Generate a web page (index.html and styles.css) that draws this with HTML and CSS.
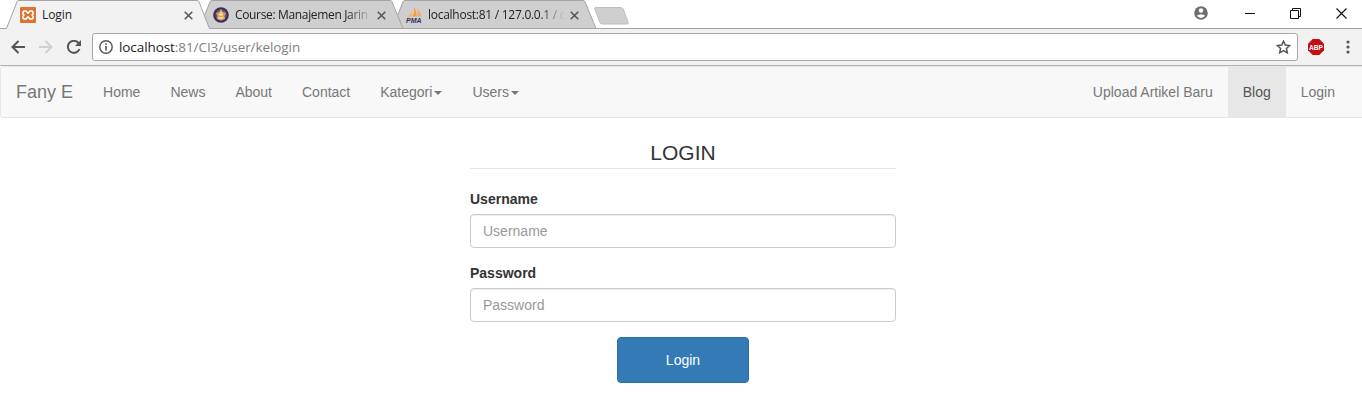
FILE: index.html
```html
<!DOCTYPE html>
<html lang="id">
<head>
<meta charset="utf-8">
<title>Login</title>
<link rel="stylesheet" href="styles.css">
</head>
<body>
<div class="browser">
  <div class="tabstrip">
    <div class="tab tab-active">
      <svg class="tab-shape" width="208" height="29" viewBox="0 0 208 29"><path d="M0 28.500H1.500L12 1.800Q12.600.500 14 .500H192Q193.500.500 194 1.800L204.500 28.500H208V29H0Z" fill="#f2f2f2"/><path d="M0 28.500H1.500L12 1.800Q12.600.500 14 .500H192Q193.500.500 194 1.800L204.500 28.500H208" fill="none" stroke="#a5a3a5"/></svg>
      <svg class="favicon" width="16" height="16" viewBox="0 0 16 16"><rect width="16" height="16" rx="1" fill="#dd7430"/><path d="M4 4H6L8 6.200 10 4H12L13 5V7L12 8 13 9V11L12 12H10L8 9.800 6 12H4L3 11V9L4 8 3 7V5Z" fill="none" stroke="#fff" stroke-width="1.700" stroke-linejoin="round"/></svg>
      <span class="tab-title">Login</span>
      <svg class="tab-close" width="9" height="9" viewBox="0 0 9 9"><path d="M.700.700 8.300 8.300M8.300.700.700 8.300" stroke="#555" stroke-width="1.500"/></svg>
    </div>
    <div class="tab tab-second">
      <svg class="tab-shape" width="208" height="29" viewBox="0 0 208 29"><path d="M1.500 28.500 L12 1.800 Q12.600.500 14 .500 H192 Q193.500.500 194 1.800 L205 28.500Z" fill="#cfcfcf" stroke="#a5a3a5"/></svg>
      <svg class="favicon" width="16" height="16" viewBox="0 0 16 16"><circle cx="8" cy="8" r="7.800" fill="#35305f"/><circle cx="8" cy="8" r="5.700" fill="#794d69"/><path d="M8 2 9.800 5 13 6 11.500 9 12 12 8 13.500 4 12 4.500 9 3 6 6.200 5Z" fill="#d9a45d"/><path d="M8 4.500V9M6 7.500H10M5.500 11H10.500" stroke="#f6dfa4" stroke-width="1.500"/></svg>
      <span class="tab-title tab-title-fade tab-title-course">Course: Manajemen Jarin</span>
      <svg class="tab-close" width="9" height="9" viewBox="0 0 9 9"><path d="M.700.700 8.300 8.300M8.300.700.700 8.300" stroke="#555" stroke-width="1.500"/></svg>
    </div>
    <div class="tab tab-third">
      <svg class="tab-shape" width="208" height="29" viewBox="0 0 208 29"><path d="M1.500 28.500 L12 1.800 Q12.600.500 14 .500 H192 Q193.500.500 194 1.800 L205 28.500Z" fill="#cfcfcf" stroke="#a5a3a5"/></svg>
      <svg class="favicon" width="16" height="16" viewBox="0 0 16 16"><path d="M1 9.500Q4.500 7.500 5.500 3L6 9.500Z" fill="#f2b878"/><path d="M6.500 9.500Q9 5 8 .500Q10 2.500 11 9.500Z" fill="#f89c3c"/><path d="M11.500 9.500Q12.500 5 11 1Q14.500 5 15.500 9.500Z" fill="#f6ac5c"/><text x="0" y="15.500" class="pma">PMA</text></svg>
      <span class="tab-title tab-title-fade">localhost:81 / 127.0.0.1 / d</span>
      <svg class="tab-close" width="9" height="9" viewBox="0 0 9 9"><path d="M.700.700 8.300 8.300M8.300.700.700 8.300" stroke="#555" stroke-width="1.500"/></svg>
    </div>
    <svg class="new-tab" width="35" height="18" viewBox="0 0 35 18"><path d="M2 .500H26.500Q28.500.500 29.200 2L34 15Q34.700 17 33 17H8.500Q6.700 17 6 15.500L.800 2Q.300.500 2 .500Z" fill="#cfcfcf" stroke="#bdbdbd"/></svg>
    <div class="window-controls">
      <svg width="14" height="14" viewBox="0 0 14 14"><circle cx="7" cy="7" r="6.800" fill="#6e6e6e"/><circle cx="7" cy="4.500" r="2.200" fill="#fff"/><path d="M2.700 9.800Q7 6.600 11.300 9.800Q7 14 2.700 9.800Z" fill="#fff"/></svg>
      <svg width="10" height="11" viewBox="0 0 10 11"><path d="M0 5.500H10" stroke="#111"/></svg>
      <svg width="11" height="11" viewBox="0 0 11 11"><path d="M.500 2.500H8.500V10.500H.500ZM2.500 2.500V.500H10.500V8.500H8.500" fill="none" stroke="#111"/></svg>
      <svg width="11" height="11" viewBox="0 0 11 11"><path d="M.500.500 10.500 10.500M10.500.500.500 10.500" stroke="#111" stroke-width="1.100"/></svg>
    </div>
  </div>
  <div class="toolbar">
    <svg width="14" height="14" viewBox="0 0 14 14"><path d="M14 7H2M7.500 1 1.500 7 7.500 13" fill="none" stroke="#555" stroke-width="2"/></svg>
    <svg width="14" height="14" viewBox="0 0 14 14"><path d="M0 7H12M6.500 1 12.500 7 6.500 13" fill="none" stroke="#cfcfcf" stroke-width="2"/></svg>
    <svg width="15" height="14" viewBox="0 0 15 14"><path d="M12.500 9A6 6 0 1 1 11.500 3L13 4.500" fill="none" stroke="#555" stroke-width="2"/><path d="M14 0V6H8Z" fill="#555"/></svg>
    <div class="omnibox">
      <svg width="14" height="14" viewBox="0 0 14 14"><circle cx="7" cy="7" r="6.200" fill="none" stroke="#555" stroke-width="1.400"/><path d="M7 6V10.500M7 3.200V4.800" stroke="#555" stroke-width="1.600"/></svg>
      <span class="url">localhost<span class="url-path">:81/CI3/user/kelogin</span></span>
      <svg class="star" width="15" height="14" viewBox="0 0 15 14"><path d="M7.500 1.200 9.300 5.100 13.600 5.600 10.400 8.500 11.300 12.800 7.500 10.600 3.700 12.800 4.600 8.500 1.400 5.600 5.700 5.100Z" fill="none" stroke="#555" stroke-width="1.500"/></svg>
    </div>
    <svg class="abp" width="16" height="16" viewBox="0 0 16 16"><path d="M4.700 0H11.300L16 4.700V11.300L11.300 16H4.700L0 11.300V4.700Z" fill="#c70d12"/><text x="8" y="11" class="abp-text" textLength="14" lengthAdjust="spacingAndGlyphs">ABP</text></svg>
    <svg class="dots" width="4" height="14" viewBox="0 0 4 14"><g fill="#555"><circle cx="2" cy="2" r="1.600"/><circle cx="2" cy="7" r="1.600"/><circle cx="2" cy="12" r="1.600"/></g></svg>
  </div>
</div>
<nav class="navbar">
  <a class="brand">Fany E</a>
  <a class="nav-link">Home</a>
  <a class="nav-link">News</a>
  <a class="nav-link">About</a>
  <a class="nav-link">Contact</a>
  <a class="nav-link">Kategori<span class="caret"></span></a>
  <a class="nav-link">Users<span class="caret"></span></a>
  <div class="nav-right">
    <a class="nav-link">Upload Artikel Baru</a>
    <a class="nav-link nav-active">Blog</a>
    <a class="nav-link">Login</a>
  </div>
</nav>
<main class="login">
  <h1 class="login-title">LOGIN</h1>
  <label class="field-label" for="username">Username</label>
  <input class="field" id="username" type="text" placeholder="Username">
  <label class="field-label" for="password">Password</label>
  <input class="field" id="password" type="password" placeholder="Password">
  <button class="login-button">Login</button>
</main>
</body>
</html>
```
FILE: styles.css
```css
* { box-sizing: border-box; }
body {
  margin: 0;
  height: 402px;
  overflow: hidden;
  background: #fff;
  color: #333;
  font: 14px/20px "Liberation Sans", Arial, sans-serif;
}
svg { display: block; flex: none; }
.browser { font-family: "Open Sans", "Noto Sans", sans-serif; }
.tabstrip {
  display: flex;
  height: 29px;
  padding-left: 5px;
  border-bottom: 1px solid #a5a3a5;
}
.tab {
  position: relative;
  display: flex;
  align-items: center;
  flex: none;
  width: 208px;
  height: 29px;
  margin-right: -15px;
  padding: 1px 15px 0;
}
.tab-active { z-index: 3; }
.tab-second { z-index: 2; }
.tab-third { z-index: 1; }
.tab-shape { position: absolute; left: 0; top: 0; z-index: -1; }
.favicon { margin-right: 6px; }
.tab-title {
  width: 137px;
  margin-right: 5px;
  white-space: nowrap;
  color: #222;
  font-size: 12px;
  letter-spacing: -0.1px;
}
.tab-title-fade {
  letter-spacing: -0.27px;
  -webkit-mask-image: linear-gradient(90deg, #000 112px, transparent 137px);
  mask-image: linear-gradient(90deg, #000 112px, transparent 137px);
}
.tab-title-course { letter-spacing: -0.34px; }
.pma { font: italic bold 7px "Liberation Sans", sans-serif; fill: #34315f; }
.new-tab { margin: 7px 0 0 10px; }
.window-controls {
  display: flex;
  align-items: center;
  gap: 35px;
  height: 26px;
  margin-left: auto;
  padding-right: 15px;
}
.window-controls svg:first-child { margin-right: 2px; }
.toolbar {
  display: flex;
  align-items: center;
  gap: 14px;
  height: 37px;
  padding: 0 12px 0 11px;
  background: #f2f2f2;
  border-bottom: 1px solid #b3b1b3;
}
.omnibox {
  display: flex;
  align-items: center;
  flex: 1;
  height: 28px;
  margin-left: -4px;
  padding: 0 6px;
  background: #fff;
  border: 1px solid #a9a7a9;
  border-radius: 3px;
}
.url { margin-left: 6px; color: #222; font-size: 13.500px; letter-spacing: -0.08px; }
.url-path { color: #808080; }
.star { margin-left: auto; }
.abp { margin-left: -4px; }
.abp-text { font: bold 8px "Liberation Sans", sans-serif; fill: #fff; text-anchor: middle; }
.dots { margin-left: 8px; }
.navbar {
  display: flex;
  height: 52px;
  background: #f8f8f8;
  border: 1px solid #e7e7e7;
  border-right: 0;
  border-radius: 4px 0 0 4px;
  color: #777;
}
.brand { padding: 15px; font-size: 18px; }
.nav-link { padding: 15px; white-space: nowrap; }
.nav-active { background: #e7e7e7; color: #555; }
.nav-right { display: flex; margin-left: auto; padding-right: 12px; }
.caret {
  display: inline-block;
  margin-left: 2px;
  vertical-align: middle;
  border: 4px solid transparent;
  border-top-color: #777;
  border-bottom: 0;
}
.login { width: 426px; margin: 22px 0 0 470px; }
.login-title {
  height: 29px;
  margin: 0 0 20px;
  border-bottom: 1px solid #e5e5e5;
  font-size: 21px;
  font-weight: 400;
  line-height: 26px;
  text-align: center;
}
.field-label { display: block; height: 25px; font-weight: 700; }
.field {
  display: block;
  width: 100%;
  height: 34px;
  margin-bottom: 15px;
  padding: 6px 12px;
  border: 1px solid #ccc;
  border-radius: 4px;
  box-shadow: inset 0 1px 1px rgba(0, 0, 0, 0.075);
  font: inherit;
}
.field::placeholder { color: #999; opacity: 1; }
.login-button {
  display: block;
  width: 132px;
  height: 46px;
  margin-left: 147px;
  padding: 0;
  background: #337ab7;
  border: 1px solid #2e6da4;
  border-radius: 4px;
  color: #fff;
  font: inherit;
}
```
